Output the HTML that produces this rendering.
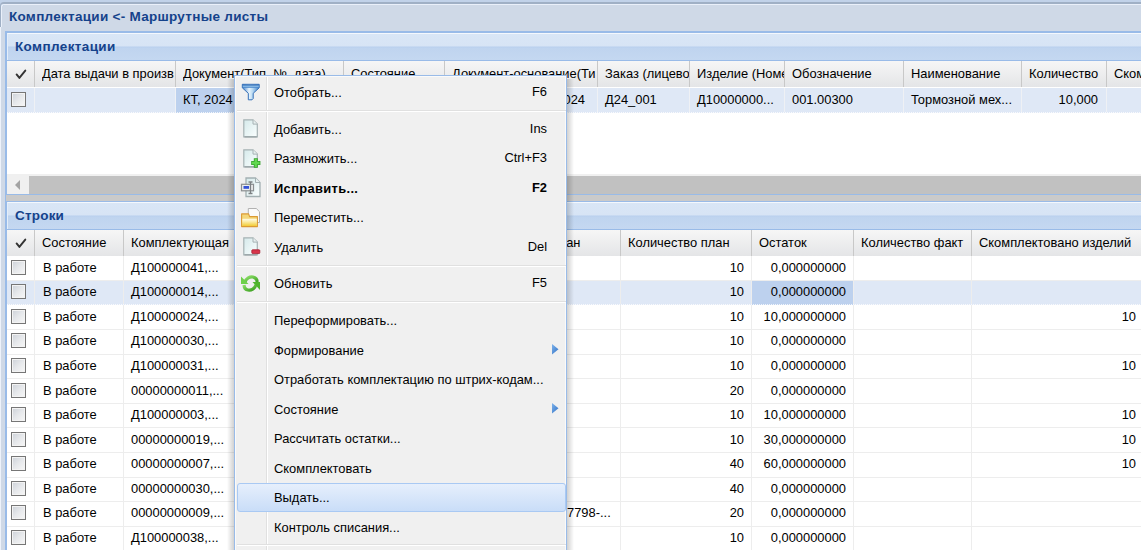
<!DOCTYPE html><html><head><meta charset="utf-8"><style>
*{margin:0;padding:0;box-sizing:border-box}
body{width:1141px;height:550px;overflow:hidden;position:relative;background:#cfd9e7;font-family:"Liberation Sans", sans-serif;font-size:12.9px;color:#000}
div,span{position:absolute}
.t{white-space:nowrap;line-height:15px}
.ph{background:linear-gradient(#d9e6f6 0,#d7e4f5 12px,#b8cfee 13px,#bfd4ef 14px,#c5d8f1 100%);border-top:1px solid #f4f8fd;border-left:1px solid #e4eefa}
.ptitle{font-weight:bold;font-size:13.5px;letter-spacing:0.2px;color:#15428b;white-space:nowrap;line-height:15px}
.gh{background:linear-gradient(#f6f6f6,#e4e5e7)}
.gsep{width:1px;background:#c8c8c8}
.rsep{height:1px;background:#ededed}
.csep{width:1px;background:#ededed}
.cb{width:15px;height:15px;border:1px solid #767676;background:linear-gradient(135deg,#ccd1d8 0,#e6e8eb 50%,#f7f7f7 100%);box-shadow:inset 0 0 0 1px #f3f3f3}
.mi{left:274px;margin-top:1px;white-space:nowrap;line-height:15px;color:#000}
.sc{right:594px;margin-top:0px;white-space:nowrap;line-height:15px;text-align:right}
</style></head><body>

<div style="left:0;top:0;width:1141px;height:2px;background:#c1d2e9"></div>
<div style="left:0;top:0;width:4px;height:6px;background:#c1d2e9"></div>
<div style="left:0;top:2px;width:1141px;height:25px;border-left:1px solid #a0b0c5;border-top:2px solid #a0b0c5;border-top-left-radius:4px"></div>
<div style="left:1px;top:4px;width:1140px;height:23px;border-left:1px solid #eaf0fa;border-top:1px solid #eaf0fa;border-top-left-radius:3px"></div>
<div style="left:0;top:27px;width:1px;height:523px;background:#eef3fb"></div>
<div class="ptitle" style="left:9px;top:9px;letter-spacing:0.28px">Комплектации &lt;- Маршрутные листы</div>
<div style="left:5px;top:31px;width:1136px;height:164px;background:#fff;border-left:2px solid #99bbe8;border-top:2px solid #99bbe8;border-bottom:1px solid #99bbe8"></div>
<div class="ph" style="left:7px;top:33px;width:1134px;height:28px"></div>
<div style="left:7px;top:60px;width:1134px;height:1px;background:#99bbe8"></div>
<div class="ptitle" style="left:15px;top:39px;letter-spacing:0.38px">Комплектации</div>
<div class="gh" style="left:7px;top:61px;width:1134px;height:26px"></div>
<div class="gsep" style="left:34px;top:61px;height:26px"></div>
<div class="gsep" style="left:175px;top:61px;height:26px"></div>
<div class="gsep" style="left:343px;top:61px;height:26px"></div>
<div class="gsep" style="left:444px;top:61px;height:26px"></div>
<div class="gsep" style="left:597px;top:61px;height:26px"></div>
<div class="gsep" style="left:689px;top:61px;height:26px"></div>
<div class="gsep" style="left:784px;top:61px;height:26px"></div>
<div class="gsep" style="left:903px;top:61px;height:26px"></div>
<div class="gsep" style="left:1021px;top:61px;height:26px"></div>
<div class="gsep" style="left:1106px;top:61px;height:26px"></div>
<div class="t" style="left:42px;top:65.5px;width:133px;overflow:hidden">Дата выдачи в произв</div>
<div class="t" style="left:183px;top:65.5px;width:160px;overflow:hidden">Документ(Тип, №, дата)</div>
<div class="t" style="left:351px;top:65.5px;width:93px;overflow:hidden">Состояние</div>
<div class="t" style="left:452px;top:65.5px;width:145px;overflow:hidden">Документ-основание(Ти</div>
<div class="t" style="left:605px;top:65.5px;width:84px;overflow:hidden">Заказ (лицево</div>
<div class="t" style="left:697px;top:65.5px;width:87px;overflow:hidden">Изделие (Номе</div>
<div class="t" style="left:792px;top:65.5px;width:111px;overflow:hidden">Обозначение</div>
<div class="t" style="left:911px;top:65.5px;width:110px;overflow:hidden">Наименование</div>
<div class="t" style="left:1029px;top:65.5px;width:77px;overflow:hidden">Количество</div>
<div class="t" style="left:1114px;top:65.5px;width:86px;overflow:hidden">Ском</div>
<div style="left:7px;top:87px;width:1134px;height:1px;background:#fff"></div>
<div style="left:7px;top:88px;width:1134px;height:24px;background:#dfe8f6"></div>
<div style="left:7px;top:112px;width:1134px;height:1px;background:#dfe8f6"></div>
<div style="left:176px;top:88px;width:167px;height:25px;background:#bdd1ee"></div>
<div style="left:7px;top:112px;width:1134px;height:1px;background:repeating-linear-gradient(90deg,#ffffff 0,#ffffff 1px,transparent 1px,transparent 2px);opacity:0.8"></div>
<div class="csep" style="left:34px;top:88px;height:24px;background:#eff1f5"></div>
<div class="csep" style="left:175px;top:88px;height:24px;background:#eff1f5"></div>
<div class="csep" style="left:343px;top:88px;height:24px;background:#eff1f5"></div>
<div class="csep" style="left:444px;top:88px;height:24px;background:#eff1f5"></div>
<div class="csep" style="left:597px;top:88px;height:24px;background:#eff1f5"></div>
<div class="csep" style="left:689px;top:88px;height:24px;background:#eff1f5"></div>
<div class="csep" style="left:784px;top:88px;height:24px;background:#eff1f5"></div>
<div class="csep" style="left:903px;top:88px;height:24px;background:#eff1f5"></div>
<div class="csep" style="left:1021px;top:88px;height:24px;background:#eff1f5"></div>
<div class="csep" style="left:1106px;top:88px;height:24px;background:#eff1f5"></div>
<div class="cb" style="left:11px;top:92px"></div>
<div class="t" style="left:183px;top:92px">КТ, 2024</div>
<div class="t" style="left:605px;top:92px">Д24_001</div>
<div class="t" style="left:697px;top:92px">Д10000000...</div>
<div class="t" style="left:792px;top:92px">001.00300</div>
<div class="t" style="left:911px;top:92px">Тормозной мех...</div>
<div class="t" style="left:1021px;top:92px;width:77px;text-align:right">10,000</div>
<div class="t" style="left:444px;top:92px;width:141px;text-align:right">ЗП, 01.01.2024</div>
<div style="left:7px;top:174px;width:1134px;height:20px;background:#f0f0f0"></div>
<div style="left:29px;top:176px;width:1112px;height:18px;background:#c1c1c1"></div>
<div style="left:15px;top:180px;width:0;height:0;border-top:5px solid transparent;border-bottom:5px solid transparent;border-right:5px solid #a3a3a3"></div>
<div style="left:6px;top:195px;width:1135px;height:6px;background:#cacaca"></div>
<div style="left:5px;top:195px;width:1px;height:6px;background:#99bbe8"></div>
<div style="left:5px;top:201px;width:1136px;height:360px;background:#fff;border-left:2px solid #99bbe8;border-top:1px solid #99bbe8"></div>
<div class="ph" style="left:7px;top:202px;width:1134px;height:28px"></div>
<div style="left:7px;top:229px;width:1134px;height:1px;background:#99bbe8"></div>
<div class="ptitle" style="left:15px;top:208px;letter-spacing:0.2px">Строки</div>
<div class="gh" style="left:7px;top:230px;width:1134px;height:26px"></div>
<div class="gsep" style="left:34px;top:230px;height:26px"></div>
<div class="gsep" style="left:123px;top:230px;height:26px"></div>
<div class="gsep" style="left:300px;top:230px;height:26px"></div>
<div class="gsep" style="left:480px;top:230px;height:26px"></div>
<div class="gsep" style="left:620px;top:230px;height:26px"></div>
<div class="gsep" style="left:751px;top:230px;height:26px"></div>
<div class="gsep" style="left:853px;top:230px;height:26px"></div>
<div class="gsep" style="left:971px;top:230px;height:26px"></div>
<div class="t" style="left:42px;top:234.5px">Состояние</div>
<div class="t" style="left:131px;top:234.5px">Комплектующая</div>
<div class="t" style="left:628px;top:234.5px">Количество план</div>
<div class="t" style="left:759px;top:234.5px">Остаток</div>
<div class="t" style="left:861px;top:234.5px">Количество факт</div>
<div class="t" style="left:979px;top:234.5px">Скомплектовано изделий</div>
<div style="left:7px;top:256px;width:1134px;height:24px;background:#fff"></div>
<div class="rsep" style="left:7px;top:280px;width:1134px"></div>
<div class="csep" style="left:34px;top:256px;height:24px"></div>
<div class="csep" style="left:123px;top:256px;height:24px"></div>
<div class="csep" style="left:300px;top:256px;height:24px"></div>
<div class="csep" style="left:480px;top:256px;height:24px"></div>
<div class="csep" style="left:620px;top:256px;height:24px"></div>
<div class="csep" style="left:751px;top:256px;height:24px"></div>
<div class="csep" style="left:853px;top:256px;height:24px"></div>
<div class="csep" style="left:971px;top:256px;height:24px"></div>
<div class="cb" style="left:11px;top:260px"></div>
<div class="t" style="left:43px;top:260.00px">В работе</div>
<div class="t" style="left:131px;top:260.00px">Д100000041,...</div>
<div class="t" style="left:620px;top:260.00px;width:124px;text-align:right">10</div>
<div class="t" style="left:751px;top:260.00px;width:95px;text-align:right">0,000000000</div>
<div style="left:7px;top:281px;width:1134px;height:23px;background:#dfe8f6"></div>
<div style="left:7px;top:304px;width:1134px;height:1px;background:#dfe8f6"></div>
<div style="left:752px;top:281px;width:101px;height:24px;background:#bdd1ee"></div>
<div style="left:7px;top:304px;width:1134px;height:1px;background:repeating-linear-gradient(90deg,#ffffff 0,#ffffff 1px,transparent 1px,transparent 2px);opacity:0.8"></div>
<div class="csep" style="left:34px;top:281px;height:23px"></div>
<div class="csep" style="left:123px;top:281px;height:23px"></div>
<div class="csep" style="left:300px;top:281px;height:23px"></div>
<div class="csep" style="left:480px;top:281px;height:23px"></div>
<div class="csep" style="left:620px;top:281px;height:23px"></div>
<div class="csep" style="left:751px;top:281px;height:23px"></div>
<div class="csep" style="left:853px;top:281px;height:23px"></div>
<div class="csep" style="left:971px;top:281px;height:23px"></div>
<div class="cb" style="left:11px;top:284px"></div>
<div class="t" style="left:43px;top:284.00px">В работе</div>
<div class="t" style="left:131px;top:284.00px">Д100000014,...</div>
<div class="t" style="left:620px;top:284.00px;width:124px;text-align:right">10</div>
<div class="t" style="left:751px;top:284.00px;width:95px;text-align:right">0,000000000</div>
<div style="left:7px;top:305px;width:1134px;height:24px;background:#fff"></div>
<div class="rsep" style="left:7px;top:329px;width:1134px"></div>
<div class="csep" style="left:34px;top:305px;height:24px"></div>
<div class="csep" style="left:123px;top:305px;height:24px"></div>
<div class="csep" style="left:300px;top:305px;height:24px"></div>
<div class="csep" style="left:480px;top:305px;height:24px"></div>
<div class="csep" style="left:620px;top:305px;height:24px"></div>
<div class="csep" style="left:751px;top:305px;height:24px"></div>
<div class="csep" style="left:853px;top:305px;height:24px"></div>
<div class="csep" style="left:971px;top:305px;height:24px"></div>
<div class="cb" style="left:11px;top:309px"></div>
<div class="t" style="left:43px;top:309.00px">В работе</div>
<div class="t" style="left:131px;top:309.00px">Д100000024,...</div>
<div class="t" style="left:620px;top:309.00px;width:124px;text-align:right">10</div>
<div class="t" style="left:751px;top:309.00px;width:95px;text-align:right">10,000000000</div>
<div class="t" style="left:971px;top:309.00px;width:165px;text-align:right">10</div>
<div style="left:7px;top:330px;width:1134px;height:24px;background:#fff"></div>
<div class="rsep" style="left:7px;top:354px;width:1134px"></div>
<div class="csep" style="left:34px;top:330px;height:24px"></div>
<div class="csep" style="left:123px;top:330px;height:24px"></div>
<div class="csep" style="left:300px;top:330px;height:24px"></div>
<div class="csep" style="left:480px;top:330px;height:24px"></div>
<div class="csep" style="left:620px;top:330px;height:24px"></div>
<div class="csep" style="left:751px;top:330px;height:24px"></div>
<div class="csep" style="left:853px;top:330px;height:24px"></div>
<div class="csep" style="left:971px;top:330px;height:24px"></div>
<div class="cb" style="left:11px;top:333px"></div>
<div class="t" style="left:43px;top:333.00px">В работе</div>
<div class="t" style="left:131px;top:333.00px">Д100000030,...</div>
<div class="t" style="left:620px;top:333.00px;width:124px;text-align:right">10</div>
<div class="t" style="left:751px;top:333.00px;width:95px;text-align:right">0,000000000</div>
<div style="left:7px;top:355px;width:1134px;height:23px;background:#fff"></div>
<div class="rsep" style="left:7px;top:378px;width:1134px"></div>
<div class="csep" style="left:34px;top:355px;height:23px"></div>
<div class="csep" style="left:123px;top:355px;height:23px"></div>
<div class="csep" style="left:300px;top:355px;height:23px"></div>
<div class="csep" style="left:480px;top:355px;height:23px"></div>
<div class="csep" style="left:620px;top:355px;height:23px"></div>
<div class="csep" style="left:751px;top:355px;height:23px"></div>
<div class="csep" style="left:853px;top:355px;height:23px"></div>
<div class="csep" style="left:971px;top:355px;height:23px"></div>
<div class="cb" style="left:11px;top:358px"></div>
<div class="t" style="left:43px;top:358.00px">В работе</div>
<div class="t" style="left:131px;top:358.00px">Д100000031,...</div>
<div class="t" style="left:620px;top:358.00px;width:124px;text-align:right">10</div>
<div class="t" style="left:751px;top:358.00px;width:95px;text-align:right">0,000000000</div>
<div class="t" style="left:971px;top:358.00px;width:165px;text-align:right">10</div>
<div style="left:7px;top:379px;width:1134px;height:24px;background:#fff"></div>
<div class="rsep" style="left:7px;top:403px;width:1134px"></div>
<div class="csep" style="left:34px;top:379px;height:24px"></div>
<div class="csep" style="left:123px;top:379px;height:24px"></div>
<div class="csep" style="left:300px;top:379px;height:24px"></div>
<div class="csep" style="left:480px;top:379px;height:24px"></div>
<div class="csep" style="left:620px;top:379px;height:24px"></div>
<div class="csep" style="left:751px;top:379px;height:24px"></div>
<div class="csep" style="left:853px;top:379px;height:24px"></div>
<div class="csep" style="left:971px;top:379px;height:24px"></div>
<div class="cb" style="left:11px;top:383px"></div>
<div class="t" style="left:43px;top:383.00px">В работе</div>
<div class="t" style="left:131px;top:383.00px">00000000011,...</div>
<div class="t" style="left:620px;top:383.00px;width:124px;text-align:right">20</div>
<div class="t" style="left:751px;top:383.00px;width:95px;text-align:right">0,000000000</div>
<div style="left:7px;top:404px;width:1134px;height:23px;background:#fff"></div>
<div class="rsep" style="left:7px;top:427px;width:1134px"></div>
<div class="csep" style="left:34px;top:404px;height:23px"></div>
<div class="csep" style="left:123px;top:404px;height:23px"></div>
<div class="csep" style="left:300px;top:404px;height:23px"></div>
<div class="csep" style="left:480px;top:404px;height:23px"></div>
<div class="csep" style="left:620px;top:404px;height:23px"></div>
<div class="csep" style="left:751px;top:404px;height:23px"></div>
<div class="csep" style="left:853px;top:404px;height:23px"></div>
<div class="csep" style="left:971px;top:404px;height:23px"></div>
<div class="cb" style="left:11px;top:407px"></div>
<div class="t" style="left:43px;top:407.00px">В работе</div>
<div class="t" style="left:131px;top:407.00px">Д100000003,...</div>
<div class="t" style="left:620px;top:407.00px;width:124px;text-align:right">10</div>
<div class="t" style="left:751px;top:407.00px;width:95px;text-align:right">10,000000000</div>
<div class="t" style="left:971px;top:407.00px;width:165px;text-align:right">10</div>
<div style="left:7px;top:428px;width:1134px;height:24px;background:#fff"></div>
<div class="rsep" style="left:7px;top:452px;width:1134px"></div>
<div class="csep" style="left:34px;top:428px;height:24px"></div>
<div class="csep" style="left:123px;top:428px;height:24px"></div>
<div class="csep" style="left:300px;top:428px;height:24px"></div>
<div class="csep" style="left:480px;top:428px;height:24px"></div>
<div class="csep" style="left:620px;top:428px;height:24px"></div>
<div class="csep" style="left:751px;top:428px;height:24px"></div>
<div class="csep" style="left:853px;top:428px;height:24px"></div>
<div class="csep" style="left:971px;top:428px;height:24px"></div>
<div class="cb" style="left:11px;top:432px"></div>
<div class="t" style="left:43px;top:432.00px">В работе</div>
<div class="t" style="left:131px;top:432.00px">00000000019,...</div>
<div class="t" style="left:620px;top:432.00px;width:124px;text-align:right">10</div>
<div class="t" style="left:751px;top:432.00px;width:95px;text-align:right">30,000000000</div>
<div class="t" style="left:971px;top:432.00px;width:165px;text-align:right">10</div>
<div style="left:7px;top:453px;width:1134px;height:24px;background:#fff"></div>
<div class="rsep" style="left:7px;top:477px;width:1134px"></div>
<div class="csep" style="left:34px;top:453px;height:24px"></div>
<div class="csep" style="left:123px;top:453px;height:24px"></div>
<div class="csep" style="left:300px;top:453px;height:24px"></div>
<div class="csep" style="left:480px;top:453px;height:24px"></div>
<div class="csep" style="left:620px;top:453px;height:24px"></div>
<div class="csep" style="left:751px;top:453px;height:24px"></div>
<div class="csep" style="left:853px;top:453px;height:24px"></div>
<div class="csep" style="left:971px;top:453px;height:24px"></div>
<div class="cb" style="left:11px;top:456px"></div>
<div class="t" style="left:43px;top:456.00px">В работе</div>
<div class="t" style="left:131px;top:456.00px">00000000007,...</div>
<div class="t" style="left:620px;top:456.00px;width:124px;text-align:right">40</div>
<div class="t" style="left:751px;top:456.00px;width:95px;text-align:right">60,000000000</div>
<div class="t" style="left:971px;top:456.00px;width:165px;text-align:right">10</div>
<div style="left:7px;top:478px;width:1134px;height:23px;background:#fff"></div>
<div class="rsep" style="left:7px;top:501px;width:1134px"></div>
<div class="csep" style="left:34px;top:478px;height:23px"></div>
<div class="csep" style="left:123px;top:478px;height:23px"></div>
<div class="csep" style="left:300px;top:478px;height:23px"></div>
<div class="csep" style="left:480px;top:478px;height:23px"></div>
<div class="csep" style="left:620px;top:478px;height:23px"></div>
<div class="csep" style="left:751px;top:478px;height:23px"></div>
<div class="csep" style="left:853px;top:478px;height:23px"></div>
<div class="csep" style="left:971px;top:478px;height:23px"></div>
<div class="cb" style="left:11px;top:481px"></div>
<div class="t" style="left:43px;top:481.00px">В работе</div>
<div class="t" style="left:131px;top:481.00px">00000000030,...</div>
<div class="t" style="left:620px;top:481.00px;width:124px;text-align:right">40</div>
<div class="t" style="left:751px;top:481.00px;width:95px;text-align:right">0,000000000</div>
<div style="left:7px;top:502px;width:1134px;height:24px;background:#fff"></div>
<div class="rsep" style="left:7px;top:526px;width:1134px"></div>
<div class="csep" style="left:34px;top:502px;height:24px"></div>
<div class="csep" style="left:123px;top:502px;height:24px"></div>
<div class="csep" style="left:300px;top:502px;height:24px"></div>
<div class="csep" style="left:480px;top:502px;height:24px"></div>
<div class="csep" style="left:620px;top:502px;height:24px"></div>
<div class="csep" style="left:751px;top:502px;height:24px"></div>
<div class="csep" style="left:853px;top:502px;height:24px"></div>
<div class="csep" style="left:971px;top:502px;height:24px"></div>
<div class="cb" style="left:11px;top:505px"></div>
<div class="t" style="left:43px;top:505.00px">В работе</div>
<div class="t" style="left:131px;top:505.00px">00000000009,...</div>
<div class="t" style="left:567px;top:505.00px">7798-...</div>
<div class="t" style="left:620px;top:505.00px;width:124px;text-align:right">20</div>
<div class="t" style="left:751px;top:505.00px;width:95px;text-align:right">0,000000000</div>
<div style="left:7px;top:527px;width:1134px;height:24px;background:#fff"></div>
<div class="rsep" style="left:7px;top:551px;width:1134px"></div>
<div class="csep" style="left:34px;top:527px;height:24px"></div>
<div class="csep" style="left:123px;top:527px;height:24px"></div>
<div class="csep" style="left:300px;top:527px;height:24px"></div>
<div class="csep" style="left:480px;top:527px;height:24px"></div>
<div class="csep" style="left:620px;top:527px;height:24px"></div>
<div class="csep" style="left:751px;top:527px;height:24px"></div>
<div class="csep" style="left:853px;top:527px;height:24px"></div>
<div class="csep" style="left:971px;top:527px;height:24px"></div>
<div class="cb" style="left:11px;top:530px"></div>
<div class="t" style="left:43px;top:530.00px">В работе</div>
<div class="t" style="left:131px;top:530.00px">Д100000038,...</div>
<div class="t" style="left:620px;top:530.00px;width:124px;text-align:right">10</div>
<div class="t" style="left:751px;top:530.00px;width:95px;text-align:right">0,000000000</div>
<div class="t" style="left:440px;top:234.5px;width:140.5px;text-align:right">Количество план</div>
<div style="left:227px;top:79px;width:347px;height:480px;background:linear-gradient(90deg,rgba(0,0,0,0) 0,rgba(0,0,0,0.18) 7px,rgba(0,0,0,0.18) 340px,rgba(0,0,0,0) 347px)"></div>
<div style="left:234px;top:75px;width:333px;height:490px;background:#f0f0f0;border:1px solid #99bbe8"></div>
<div style="left:235px;top:76px;width:331px;height:490px;border:1px solid #fafafa;border-bottom:none"></div>
<div style="left:266px;top:77px;width:1px;height:480px;background:#e0e0e0"></div>
<div style="left:267px;top:77px;width:1px;height:480px;background:#fff"></div>
<div style="left:237px;top:110px;width:329px;height:1px;background:#e0e0e0"></div>
<div style="left:237px;top:111px;width:329px;height:1px;background:#fff"></div>
<div style="left:237px;top:265px;width:329px;height:1px;background:#e0e0e0"></div>
<div style="left:237px;top:266px;width:329px;height:1px;background:#fff"></div>
<div style="left:237px;top:301px;width:329px;height:1px;background:#e0e0e0"></div>
<div style="left:237px;top:302px;width:329px;height:1px;background:#fff"></div>
<div style="left:237px;top:544px;width:329px;height:1px;background:#e0e0e0"></div>
<div style="left:237px;top:545px;width:329px;height:1px;background:#fff"></div>
<div class="mi" style="top:84.0px;">Отобрать...</div>
<div class="sc" style="top:84.0px;">F6</div>
<svg style="position:absolute;left:241px;top:83px" width="20" height="19" viewBox="0 0 20 19"><defs><linearGradient id="fg" x1="0" y1="0" x2="1" y2="0"><stop offset="0" stop-color="#3f7fca"/><stop offset="0.4" stop-color="#e8f4fc"/><stop offset="0.6" stop-color="#b9daf3"/><stop offset="1" stop-color="#3f82cc"/></linearGradient><linearGradient id="fb" x1="0" y1="0" x2="0" y2="1"><stop offset="0" stop-color="#2f6ab4"/><stop offset="0.5" stop-color="#8fbfe8"/><stop offset="1" stop-color="#3b7cc6"/></linearGradient></defs><path d="M1.3 1.3H18.2V4.8L12.2 10.3V15.6L11 16.8H7.3V10.3L1.3 4.8Z" fill="url(#fg)" stroke="#3570b8" stroke-width="1" stroke-linejoin="round"/><rect x="1.8" y="1.8" width="15.9" height="3" fill="url(#fb)"/></svg>
<div class="mi" style="top:121.0px;">Добавить...</div>
<div class="sc" style="top:121.0px;">Ins</div>
<svg style="position:absolute;left:242px;top:118px" width="20" height="21" viewBox="0 0 20 21"><defs><linearGradient id="pga" x1="0" y1="0" x2="1" y2="1"><stop offset="0" stop-color="#d5e9ea"/><stop offset="1" stop-color="#fbffff"/></linearGradient></defs><path d="M1.8 1.8H11L15.3 6.1V18.9H1.8Z" fill="url(#pga)" stroke="#a6b2b4" stroke-width="1.2"/><path d="M11 1.8V6.1H15.3" fill="#e8f0f0" stroke="#a6b2b4" stroke-width="1"/><path d="M2.5 18.9H14.8" stroke="#8e9a9c" stroke-width="1"/></svg>
<div class="mi" style="top:150.0px;">Размножить...</div>
<div class="sc" style="top:150.0px;">Ctrl+F3</div>
<svg style="position:absolute;left:242px;top:148px" width="20" height="21" viewBox="0 0 20 21"><defs><linearGradient id="pgb" x1="0" y1="0" x2="1" y2="1"><stop offset="0" stop-color="#d5e9ea"/><stop offset="1" stop-color="#fbffff"/></linearGradient></defs><path d="M1.8 1.8H11L15.3 6.1V18.9H1.8Z" fill="url(#pgb)" stroke="#a6b2b4" stroke-width="1.2"/><path d="M11 1.8V6.1H15.3" fill="#e8f0f0" stroke="#a6b2b4" stroke-width="1"/><path d="M2.5 18.9H14.8" stroke="#8e9a9c" stroke-width="1"/><path d="M13.8 10.3V19.7M9.2 15H18.4" stroke="#35a02c" stroke-width="4"/><path d="M13.8 11V19M10 15H17.6" stroke="#62d850" stroke-width="2.3"/></svg>
<div class="mi" style="top:180.0px;font-weight:bold;letter-spacing:0.35px;">Исправить...</div>
<div class="sc" style="top:180.0px;font-weight:bold;">F2</div>
<svg style="position:absolute;left:240px;top:177px" width="22" height="21" viewBox="0 0 22 21"><defs><linearGradient id="pge" x1="0" y1="0" x2="1" y2="1"><stop offset="0" stop-color="#d5e9ea"/><stop offset="1" stop-color="#fbffff"/></linearGradient></defs><path d="M6 1H15.5L20 5.5V19.5H6Z" fill="url(#pge)" stroke="#a3b0b2" stroke-width="1.3"/><path d="M15.5 1V5.5H20" fill="#e8f0f0" stroke="#a3b0b2" stroke-width="1"/><rect x="1.5" y="7.3" width="12" height="6.5" fill="#eceeee" stroke="#8a8e90" stroke-width="1.2"/><rect x="3.5" y="9" width="5.5" height="2.8" fill="#3252d8"/><path d="M10.5 5V16.5M8.5 5H12.5M8.5 16.5H12.5" stroke="#7d8284" stroke-width="1.3"/></svg>
<div class="mi" style="top:209.0px;">Переместить...</div>
<svg style="position:absolute;left:240px;top:207px" width="22" height="22" viewBox="0 0 22 22"><defs><linearGradient id="fo" x1="0" y1="0" x2="0" y2="1"><stop offset="0" stop-color="#fffbe8"/><stop offset="0.35" stop-color="#fbeeb0"/><stop offset="1" stop-color="#f2cc36"/></linearGradient></defs><path d="M8.3 1.5H16.3L19.5 4.7V15.5H8.3Z" fill="#fafafa" stroke="#b2b2b2" stroke-width="1"/><path d="M1.6 6.9H8.6L9.6 9.6H17.4V19.6H1.6Z" fill="#f4d77a" stroke="#db9a33" stroke-width="1.1" stroke-linejoin="round"/><path d="M2.3 11.8H16.8V19H2.3Z" fill="url(#fo)"/></svg>
<div class="mi" style="top:239.0px;">Удалить</div>
<div class="sc" style="top:239.0px;">Del</div>
<svg style="position:absolute;left:242px;top:236px" width="20" height="21" viewBox="0 0 20 21"><defs><linearGradient id="pgc" x1="0" y1="0" x2="1" y2="1"><stop offset="0" stop-color="#d5e9ea"/><stop offset="1" stop-color="#fbffff"/></linearGradient></defs><path d="M1.8 1.8H11L15.3 6.1V18.9H1.8Z" fill="url(#pgc)" stroke="#a6b2b4" stroke-width="1.2"/><path d="M11 1.8V6.1H15.3" fill="#e8f0f0" stroke="#a6b2b4" stroke-width="1"/><path d="M2.5 18.9H14.8" stroke="#8e9a9c" stroke-width="1"/><rect x="9.8" y="13.8" width="8" height="3.8" rx="0.8" fill="#d8344a" stroke="#a51d2e" stroke-width="0.8"/></svg>
<div class="mi" style="top:275.0px;">Обновить</div>
<div class="sc" style="top:275.0px;">F5</div>
<svg style="position:absolute;left:240px;top:274px" width="21" height="19" viewBox="0 0 21 19"><defs><linearGradient id="rf" x1="0" y1="0" x2="1" y2="1"><stop offset="0" stop-color="#8ee06a"/><stop offset="1" stop-color="#3a9f1e"/></linearGradient></defs><path d="M4.8 8.5C6 4 10 2.3 13 3S17 5.5 17.2 8" fill="none" stroke="url(#rf)" stroke-width="3.2"/><path d="M1 2.5V10H8.5Z" fill="#6ed14a"/><path d="M16 10.5C15 15 11 16.5 8 16S4.2 13.5 4 11" fill="none" stroke="url(#rf)" stroke-width="3.2"/><path d="M20 8V16L12.5 8Z" fill="#4fb52c"/></svg>
<div class="mi" style="top:312.0px;">Переформировать...</div>
<div class="mi" style="top:342.0px;">Формирование</div>
<svg style="position:absolute;left:552px;top:344px" width="7" height="11" viewBox="0 0 7 11"><defs><linearGradient id="ar" x1="0" y1="0" x2="1" y2="1"><stop offset="0" stop-color="#7fb4ec"/><stop offset="1" stop-color="#2f6fc4"/></linearGradient></defs><path d="M0 0L6.5 5.3L0 10.6Z" fill="url(#ar)"/></svg>
<div class="mi" style="top:371.0px;">Отработать комплектацию по штрих-кодам...</div>
<div class="mi" style="top:401.0px;">Состояние</div>
<svg style="position:absolute;left:552px;top:403px" width="7" height="11" viewBox="0 0 7 11"><defs><linearGradient id="ar" x1="0" y1="0" x2="1" y2="1"><stop offset="0" stop-color="#7fb4ec"/><stop offset="1" stop-color="#2f6fc4"/></linearGradient></defs><path d="M0 0L6.5 5.3L0 10.6Z" fill="url(#ar)"/></svg>
<div class="mi" style="top:430.0px;">Рассчитать остатки...</div>
<div class="mi" style="top:460.0px;">Скомплектовать</div>
<div style="left:237px;top:483px;width:329px;height:29px;border:1px solid #a9c9f3;border-radius:3px;background:linear-gradient(#e6effc,#c9ddf8)"></div>
<div class="mi" style="top:489.0px;">Выдать...</div>
<div class="mi" style="top:519.0px;">Контроль списания...</div>
<svg style="position:absolute;left:12px;top:61px" width="18" height="20" viewBox="0 0 18 20"><path d="M4.6 13.4L7.4 16.9L13.3 9.6" fill="none" stroke="#333333" stroke-width="1.9" stroke-linecap="round" stroke-linejoin="round"/></svg>
<svg style="position:absolute;left:12px;top:230px" width="18" height="20" viewBox="0 0 18 20"><path d="M4.6 13.4L7.4 16.9L13.3 9.6" fill="none" stroke="#333333" stroke-width="1.9" stroke-linecap="round" stroke-linejoin="round"/></svg>
</body></html>
